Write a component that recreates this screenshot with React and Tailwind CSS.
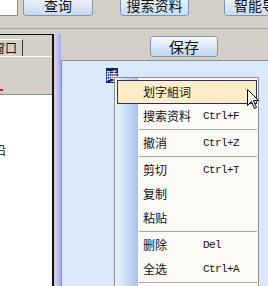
import React from 'react';

const cjk = "font-['Noto_Sans_CJK_SC','Noto_Sans',sans-serif]";
const mono = "font-['Liberation_Mono','DejaVu_Sans_Mono',monospace]";

const topBtn =
  'flex items-center justify-center whitespace-nowrap overflow-hidden leading-none rounded-[3px] ' +
  'border border-[#8197b0] bg-gradient-to-b from-[#f6f9fd] to-[#c7daf0] text-[14px] text-[#111]';

const menuItems = [
  { label: '划字組词', hot: true },
  { label: '搜索资料', key: 'Ctrl+F' },
  { sep: true },
  { label: '撤消', key: 'Ctrl+Z' },
  { sep: true },
  { label: '剪切', key: 'Ctrl+T' },
  { label: '复制' },
  { label: '粘贴' },
  { sep: true },
  { label: '删除', key: 'Del' },
  { label: '全选', key: 'Ctrl+A' },
  { sep: true },
  { label: '属性' },
];

const ContextMenu = () => (
  <div className="absolute left-[114px] top-[77px] w-[145px] h-[230px] border border-[#8d8d8d]
                  pt-[2px] pl-[2px] pr-[1px]
                  bg-[linear-gradient(to_right,#eef5ff_0px,#a4c3ee_23px,#fbfaf6_23px)]">
    {menuItems.map((it, i) =>
      it.sep ? (
        <div key={i} className="h-[3px] flex items-center pl-[22px]">
          <div className="h-px w-full bg-[#a9a9a9]" />
        </div>
      ) : (
        <div key={i}
             className={`h-[24px] flex items-center text-[12px] text-[#111] whitespace-nowrap ${
               it.hot ? 'border border-[#2e2d6a] bg-[#ffedc8] pl-[25px]' : 'pl-[26px]'
             }`}>
          <span className={`w-[60px] ${cjk}`}>{it.label}</span>
          {it.key && (
            <span className={`${mono} text-[11px] tracking-[-0.6px]`}>{it.key}</span>
          )}
        </div>
      )
    )}
  </div>
);

const Cursor = () => (
  <svg className="absolute left-[247px] top-[89px]" width="13" height="21" viewBox="0 0 13 21">
    <path d="M0.5 0.5 V16.5 L4.5 12.5 L7.5 19.5 L9.5 18.5 L6.5 11.5 H11.5 Z"
          fill="#fff" stroke="#000" strokeWidth="1" />
  </svg>
);

export default function App() {
  return (
    <div className={`relative w-[268px] h-[286px] overflow-hidden bg-[#d4d0c8] flex flex-col ${cjk}`}>

      {/* Toolbar */}
      <div className="h-[29px] shrink-0 flex items-start border-b border-[#a3a6aa]">
        <div className="w-[18px] h-[16px] shrink-0 bg-white border-r border-b border-[#8c8c8c]" />
        <button className={`${topBtn} ml-[5px] w-[70px] h-[22px] -mt-[6px] shrink-0`}>查询</button>
        <button className={`${topBtn} ml-[27px] w-[69px] h-[22px] -mt-[6px] shrink-0`}>搜索资料</button>
        <button className={`${topBtn} ml-[35px] w-[70px] h-[22px] -mt-[6px] shrink-0 justify-start pl-[9px]`}>智能导航</button>
      </div>

      <div className="flex-1 flex">

        {/* Left panel */}
        <div className="w-[54px] mt-[5px] flex flex-col border-t border-r-2 border-[#111]">
          <div className="h-[22px] flex items-end border-b border-white">
            <div className="w-[23px] h-[17px] border-t border-r border-t-white border-r-[#3a3a3a]
                            flex items-center overflow-hidden text-[12px] text-[#111]">
              <span className="-ml-[7px] whitespace-nowrap">窗口</span>
            </div>
          </div>
          <div className="h-[38px] flex items-end pb-[3px] border-b border-[#8a8a8a]">
            <div className="w-[3px] h-[2px] bg-[#d21d1d]" />
          </div>
          <div className="flex-1 bg-white overflow-hidden pt-[48px] text-[12px] text-[#111]">
            <span className="block -ml-[6px] leading-[14px]">沿</span>
          </div>
        </div>

        {/* Splitter */}
        <div className="w-[1px]" />
        <div className="w-[6px] mt-[5px] bg-gradient-to-r from-[#d2d2fb] to-[#a6a6ea]" />

        {/* Editor column */}
        <div className="flex-1 flex flex-col">
          <div className="h-[31px] shrink-0 pt-[7px] pl-[89px]">
            <button className="w-[68px] h-[21px] flex items-center justify-center rounded-[3px]
                               border border-[#8197b0] bg-gradient-to-b from-[#f6f9fd] to-[#c0d6ef]
                               text-[15px] leading-none text-[#111]">
              保存
            </button>
          </div>
          <div className="flex-1 bg-[#d9e9f9] border-t border-l border-[#8f9092] pl-[44px] pt-px">
            <span className="inline-block bg-[#0c2567] text-white text-[12px] leading-[15px]">睡</span>
          </div>
        </div>
      </div>

      <ContextMenu />
      <Cursor />
    </div>
  );
}
